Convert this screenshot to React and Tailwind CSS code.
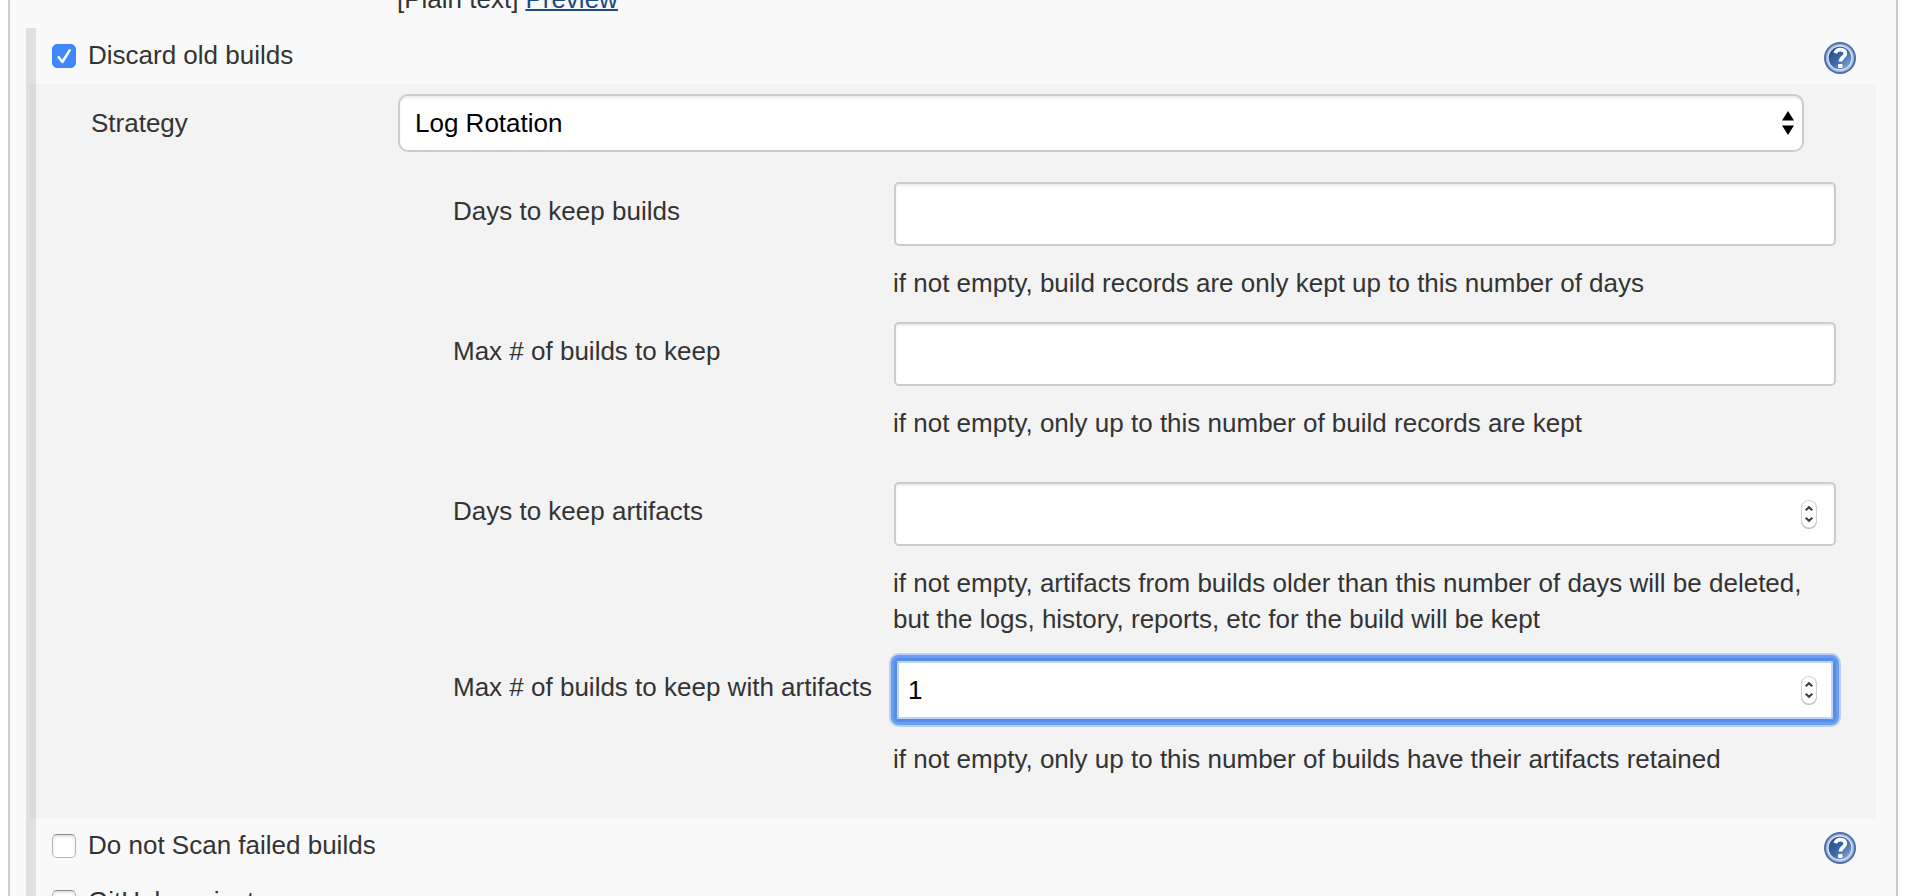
import React from "react";

function HelpButton({ id, label }) {
  return (
    <button type="button" aria-label={label} className="mt-[14px] size-8 shrink-0 rounded-full">
      <svg viewBox="0 0 32 32" className="block size-8" aria-hidden="true">
        <defs>
          <linearGradient id={id} x1="0.1" y1="0.1" x2="0.9" y2="0.95">
            <stop offset="0" stopColor="#234a88" />
            <stop offset="0.5" stopColor="#3d69a9" />
            <stop offset="1" stopColor="#86aad4" />
          </linearGradient>
        </defs>
        <circle cx="16" cy="16" r="16" fill="#4a70a8" />
        <circle cx="16" cy="16" r="14" fill="#a9bddb" />
        <circle cx="16" cy="16" r="12.4" fill="#dbe5f2" />
        <circle cx="16" cy="16" r="11.3" fill={`url(#${id})`} />
        <path
          d="M11.200 11.200c.9-2.500 2.700-3.600 5.100-3.600 3.100 0 5 1.600 5 4.100 0 3.500-4.900 3.800-4.900 7.700"
          fill="none"
          stroke="#fff"
          strokeWidth="3.800"
        />
        <rect x="14.100" y="21.900" width="4.400" height="4.200" rx="0.8" fill="#fff" />
      </svg>
    </button>
  );
}

function OptionRow({ id, label, checked, help }) {
  return (
    <div className="flex items-start pl-4 pr-5">
      <span className="relative mt-4 block size-6 shrink-0">
        <input
          id={id}
          type="checkbox"
          defaultChecked={checked}
          className="peer block size-6 appearance-none rounded-[5px] border border-[#b4b4b4] border-t-[#8e8e8e] bg-white shadow-[inset_0_2px_2px_rgba(0,0,0,0.12)] checked:border-[#3b86f8] checked:bg-[#3e88fb] checked:shadow-none"
        />
        <svg
          viewBox="0 0 24 24"
          className="pointer-events-none absolute inset-0 hidden size-6 peer-checked:block"
          aria-hidden="true"
        >
          <path
            d="M6.600 13.200l3.900 4.600L17.600 6.400"
            fill="none"
            stroke="#fff"
            strokeWidth="2.600"
            strokeLinecap="round"
            strokeLinejoin="round"
          />
        </svg>
      </span>
      <label htmlFor={id} className="ml-3 mt-[9px] mb-[11px] grow">
        {label}
      </label>
      {help && <HelpButton id={`${id}-help`} label={`Help for feature: ${label}`} />}
    </div>
  );
}

function Spinner() {
  return (
    <svg
      viewBox="0 0 18 32"
      className="pointer-events-none absolute right-[18px] top-4 h-8 w-[18px]"
      aria-hidden="true"
    >
      <rect x="1" y="3" width="16" height="28" rx="8" fill="#b5b5b5" />
      <rect x="1" y="2" width="16" height="28" rx="8" fill="#d4d4d4" />
      <rect x="2" y="3" width="14" height="26.500" rx="7" fill="#fff" />
      <path
        d="M5.700 12.200L9 9.200l3.300 3M5.700 19.800l3.300 3 3.300-3"
        fill="none"
        stroke="#404040"
        strokeWidth="2.200"
      />
    </svg>
  );
}

function Field({ id, label, help, type = "text", value = "", active }) {
  const tone = active
    ? "border-[#568ee4] shadow-[0_0_0_3px_#689df2,0_0_0_5px_#b6cff4,inset_0_0_0_1px_#568ee4,inset_0_0_0_3px_#bdd5f8]"
    : "border-[#cccccc] shadow-[inset_0_2px_2px_rgba(0,0,0,0.075)]";
  return (
    <div className="grid grid-cols-[440px_minmax(0,1fr)]">
      <label htmlFor={id} className="mt-[11px] whitespace-nowrap">
        {label}
      </label>
      <div>
        <div className="relative ml-px">
          <input
            id={id}
            type={type}
            defaultValue={value}
            aria-describedby={`${id}-note`}
            className={`block h-16 w-full rounded-[5px] border-2 bg-white px-3 text-black outline-none [appearance:textfield] [&::-webkit-inner-spin-button]:appearance-none ${tone}`}
          />
          {type === "number" && <Spinner />}
        </div>
        <p id={`${id}-note`} className="mt-[19px]">
          {help}
        </p>
      </div>
    </div>
  );
}

export default function App() {
  return (
    <main className="h-screen overflow-hidden bg-white pl-2 pr-[26px] font-['Liberation_Sans',Arial,sans-serif] text-[26px] leading-[36px] text-[#333333]">
      <form className="min-h-full border-x-2 border-[#cccccc] bg-[#f9f9f9] pl-4 pr-5">
        <div className="flex h-7 items-end gap-[7px] pb-[11px] pl-[371px]">
          <span>[Plain text]</span>
          <a href="#preview" className="text-[#204a87] underline decoration-2">
            Preview
          </a>
        </div>

        <div className="border-l-[10px] border-[#e0e0e0]">
          <OptionRow id="discard" label="Discard old builds" checked help />

          <section className="-ml-1.5 bg-black/[0.025] pb-[41px] pt-2.5">
            <div className="grid grid-cols-[307px_minmax(0,1fr)] pl-[61px] pr-[72px]">
              <label htmlFor="strategy" className="mt-[11px]">
                Strategy
              </label>
              <div className="relative">
                <select
                  id="strategy"
                  className="block h-[58px] w-full appearance-none rounded-[10px] border-2 border-[#cccccc] bg-white px-[15px] text-black shadow-[inset_0_2px_2px_rgba(0,0,0,0.075)]"
                >
                  <option>Log Rotation</option>
                </select>
                <svg
                  viewBox="0 0 12 24"
                  className="pointer-events-none absolute right-2.5 top-[17px] h-6 w-3"
                  aria-hidden="true"
                >
                  <path d="M6 0l6 9.500H0zM6 24l6-9.500H0z" fill="#000" />
                </svg>
              </div>
            </div>

            <div className="mt-[30px] flex flex-col gap-[21px] pl-[423px] pr-10">
              <Field
                id="days-builds"
                label="Days to keep builds"
                help="if not empty, build records are only kept up to this number of days"
              />
              <Field
                id="max-builds"
                label="Max # of builds to keep"
                help="if not empty, only up to this number of build records are kept"
              />
              <div className="mt-5">
                <Field
                  id="days-artifacts"
                  type="number"
                  label="Days to keep artifacts"
                  help="if not empty, artifacts from builds older than this number of days will be deleted, but the logs, history, reports, etc for the build will be kept"
                />
              </div>
              <Field
                id="max-artifacts"
                type="number"
                value="1"
                active
                label="Max # of builds to keep with artifacts"
                help="if not empty, only up to this number of builds have their artifacts retained"
              />
            </div>
          </section>

          <OptionRow id="no-scan" label="Do not Scan failed builds" help />
          <OptionRow id="github" label="GitHub project" />
        </div>
      </form>
    </main>
  );
}
